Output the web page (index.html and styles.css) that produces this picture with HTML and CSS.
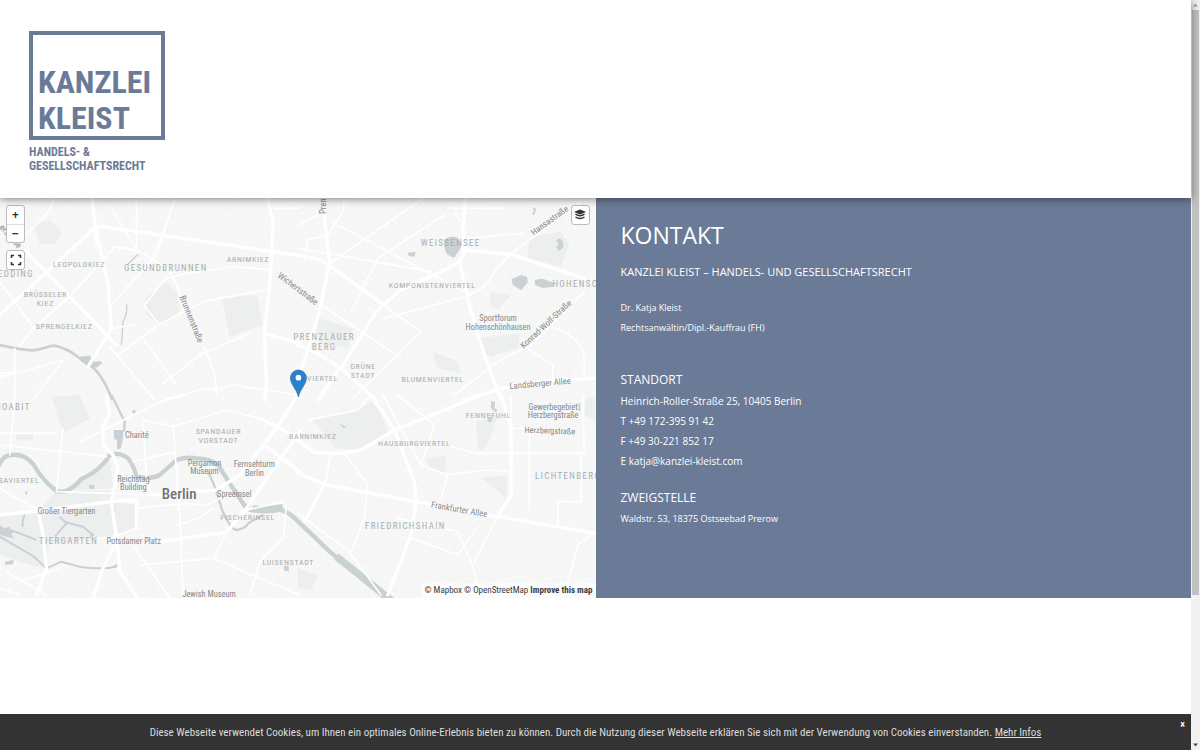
FILE: index.html
```html
<!DOCTYPE html>
<html lang="de">
<head>
<meta charset="utf-8">
<meta name="viewport" content="width=device-width, initial-scale=1">
<title>Kontakt – Kanzlei Kleist</title>
<link rel="stylesheet" href="styles.css">
</head>
<body>
<div class="shell">
<div class="page">
  <header class="header">
    <a class="logo" href="#">
      <span class="logo-box"><span>KANZLEI</span><span>KLEIST</span></span>
      <span class="logo-sub"><span>HANDELS- &amp;</span><span>GESELLSCHAFTSRECHT</span></span>
    </a>
  </header>
  <main class="main">
    <section class="map" aria-label="Karte">
      <svg class="map-canvas" viewBox="0 9 1788 1200" preserveAspectRatio="xMidYMid slice">
        <defs>
          <pattern id="streets" width="46" height="38" patternUnits="userSpaceOnUse" patternTransform="rotate(-9)">
            <path d="M0 8H46M0 27H30M12 0V38M33 8V38" class="lane"/>
          </pattern>
          <pattern id="streets2" width="58" height="44" patternUnits="userSpaceOnUse" patternTransform="rotate(32)">
            <path d="M0 10H58M20 0V44M43 10V44" class="lane"/>
          </pattern>
        </defs>
        <rect class="land" y="0" width="1788" height="1220"/>
        <rect y="0" width="1788" height="1220" fill="url(#streets)"/>
        <path d="M890 200L1250 330 1400 600 1500 1209H900L1150 900 890 760Z" class="land"/>
        <path d="M890 200L1250 330 1400 600 1500 1209H900L1150 900 890 760Z" fill="url(#streets2)"/>

        <g class="park">
          <path d="M435 310L500 260 530 290 540 350 480 390 440 360ZM665 310L770 300 790 390 690 425ZM100 90L150 75 185 110 165 150 120 145Z"/>
          <g transform="translate(894 0)"><path d="M695 125L790 110 815 150 790 215 690 190ZM540 430L665 415 660 460 580 485 550 470ZM405 470L480 500 490 535 420 520ZM60 370L165 400 150 460 60 440ZM580 290L640 300 600 345 575 330Z"/></g>
          <g transform="translate(0 600)"><path d="M0 360L115 345 170 290 330 285 345 320 410 330 405 400 300 430 150 445 130 520 0 430ZM155 5L240 0 270 70 190 115ZM50 115H100V135H50ZM0 430L130 520 90 510 0 480ZM240 250L330 190 340 280 220 285Z"/></g>
          <g transform="translate(894 600)"><path d="M45 75L175 50 220 20 245 45 270 110 180 165 115 160ZM550 250L630 240 625 310 590 280ZM535 80L600 60 585 110 560 165 540 165ZM385 190L445 180 440 235 395 215ZM0 520L60 540 40 585 0 580ZM865 10H893V80L860 60Z"/></g>
        </g>

        <g class="water">
          <path class="river" d="M0 450Q50 462 95 466C130 465 140 452 165 452Q205 462 232 484L262 508Q300 520 338 615" stroke-width="8"/>
          <path d="M240 485L270 482 285 500 303 498 307 505 290 518 262 512Z"/>
          <path class="river" d="M415 178L382 210M380 328Q385 350 370 380L365 450" stroke-width="4"/>
          <g transform="translate(894 0)">
            <path d="M440 135Q455 120 480 128 492 145 488 160L470 188 450 180Q435 160 440 135ZM330 173L354 171 350 185 333 183ZM775 137Q785 125 795 138L797 155 785 168 775 157 783 148ZM641 252L670 240 688 246 690 262 670 286 645 270ZM711 256Q730 247 745 255L765 262 768 275 735 279 712 270ZM705 35L715 42 711 58 702 60 708 48Z"/>
          </g>
          <g transform="translate(0 600)">
            <path class="river" d="M335 0L375 80 373 110" stroke-width="7"/>
            <path d="M342 105H371L368 140 362 162H352V135L343 132Z"/>
            <path class="river" d="M-5 215Q10 180 35 180 72 175 100 207 130 258 170 288 205 299 245 252 300 230 330 180 360 170 385 190 402 210 410 245 450 255 480 240L530 195Q560 185 590 190 630 190 655 210L690 265 735 333Q770 350 800 345 845 335 880 365L990 470 1170 620" stroke-width="13"/>
            <path class="river" d="M735 336Q790 352 850 338M1010 485L1180 620" stroke-width="22"/>
            <path class="river" d="M625 230Q650 280 665 340 690 400 710 405 730 405 750 382L790 360" stroke-width="7"/>
            <path class="river" d="M0 425L100 483 140 520 185 500 240 515Q300 525 350 515M75 360Q65 380 70 395M180 365Q195 385 210 385L250 395 280 420 270 425M200 385L165 425M20 400L60 415 110 435" stroke-width="6"/>
            <path d="M0 390L15 400 30 395 28 408 45 408 35 417 42 430 20 425 0 420ZM15 500L42 495 40 507 18 510ZM268 270H284V281H268ZM338 332H344V357H338ZM342 510L353 508 353 523ZM75 290L83 290 80 302ZM398 46L407 46V56L398 55ZM853 512L867 512V529L853 527Z"/>
          </g>
          <g transform="translate(894 600)"><path d="M126 86L145 95 138 100ZM580 18L592 20 590 40 600 45 592 52 580 40ZM570 65H582V80H570ZM842 25H848V48H842Z"/></g>
        </g>

        <g class="minor">
          <path d="M165 0Q155 40 125 75L70 125M335 40L415 170M495 105L470 180 335 330M100 395L0 260M60 455L95 405 215 300 345 155 420 170 500 220 530 265 555 345M0 545Q80 530 190 495L100 615M530 0L495 100 460 180M435 335L480 390M800 285L610 320 475 390 355 480M500 250L560 235 700 215 820 225M500 245L435 330M330 455L465 615M430 430L530 570M900 600L700 570 650 585 615 580 490 615M610 455Q650 520 650 600M335 400L405 390M0 535L50 530M45 460V615M490 565L600 480 760 410M820 40H900M410 0V160M350 155L410 165"/>
          <g transform="translate(894 0)"><path d="M140 0L135 50 90 120 30 135 20 200M390 0L90 210M0 90L60 60M440 60L240 190 160 350M120 90L500 290M500 130L680 115M455 40L620 40M70 330L310 490M255 330L370 410 160 615M470 55L500 90M470 600L600 500 700 450 860 290M690 460L765 510V560M770 400Q860 430 860 500V550M520 300L260 370M510 300Q570 280 590 230L640 175 850 20M0 160L400 230"/></g>
          <g transform="translate(0 600)"><path d="M45 0L30 180M0 115H170M0 150L320 185M190 100L170 290M240 140L480 20 560 0M430 70L440 250 455 300 545 310M520 95L540 360 550 600M430 75L520 95 680 45 780 70 900 130M400 200L530 170M170 290L335 295 450 300M0 280L115 345M480 440L680 410 760 330M410 340L560 325 620 330 680 300M410 330V400L335 430 290 430M400 450L510 610M640 490L420 510M640 490L900 600M640 490L680 415M860 330L850 430 780 500 750 600M180 520L60 560M20 530L140 600M720 350L850 320M530 390Q590 380 640 340M0 580L60 600"/></g>
          <g transform="translate(894 600)"><path d="M30 75L180 45 220 0M100 175L80 270 20 380M145 180L210 270 200 370 160 470M255 0L370 210 450 240 560 225 640 230M370 210L410 90 300 0M450 150L530 175H860L855 0M450 240L430 310M695 100V350M640 0V100H700M640 100L640 310M0 355L150 465 250 600M300 370L480 410 520 500 550 600M540 395L480 480 340 430M600 365L530 500M780 390V320H850V180M840 450L800 600M895 410L840 450"/></g>
        </g>
        <g class="major">
          <path d="M0 360L285 98 310 95 450 115 900 182M275 0L290 110 325 270 335 400" />
          <path d="M75 165L350 450M335 400L265 515M800 0L820 80 810 270 793 415 800 560 795 615M793 415L900 445M285 98L290 150"/>
          <g transform="translate(894 0)"><path d="M0 180L70 195 120 230 255 328M0 450L60 475 130 520 235 615M130 520L235 350 300 290 430 230 485 200 505 165 640 178 860 250M505 165L495 100 505 0M485 200L520 350 560 480 610 615M900 550L770 555 610 580 500 615M75 30L95 200 65 350 0 560M125 520L60 615M495 165Q500 140 498 110"/></g>
          <g transform="translate(0 600)"><path d="M0 360L115 348 335 320 410 315M115 345L130 420 140 520 110 600M320 0L330 60 308 95 312 150 340 180 355 220 335 320 350 430 360 520M350 440L310 520 280 610M355 520L410 605M410 315L410 400M470 440L680 412 740 340 850 180 900 110M450 300L650 285 720 240 830 100 900 -10M800 155L900 230M780 70L900 130"/></g>
          <g transform="translate(894 600)"><path d="M-20 120L50 173 130 175 190 165 290 105 550 0M220 0L290 105 350 260 355 320 340 420 270 600M0 235L80 268 355 320 600 365 893 415M600 365L640 300V100L610 0M80 268L20 380"/></g>
        </g>

        <g class="district">
          <text x="160" y="216">LEOPOLDKIEZ</text><text x="373" y="229" class="big">GESUNDBRUNNEN</text><text x="681" y="200">ARNIMKIEZ</text>
          <text x="-30" y="246" class="big">WEDDING</text>
          <text x="137" y="305" class="mid">BRÜSSELER</text><text x="137" y="332" class="mid">KIEZ</text><text x="108" y="402">SPRENGELKIEZ</text>
          <text x="1263" y="154" class="big">WEISSENSEE</text><text x="1167" y="280">KOMPONISTENVIERTEL</text><text x="1658" y="275" class="big">HOHENSCHÖNHAUSEN</text>
          <text x="973" y="434" class="big mid">PRENZLAUER</text><text x="973" y="466" class="big mid">BERG</text>
          <text x="1090" y="522" class="mid">GRÜNE</text><text x="1090" y="549" class="mid">STADT</text><text x="922" y="557">VIERTEL</text><text x="1205" y="562">BLUMENVIERTEL</text>
          <text x="-18" y="644" class="big">MOABIT</text><text x="656" y="717" class="mid">SPANDAUER</text><text x="656" y="744" class="mid">VORSTADT</text>
          <text x="868" y="733">BARNIMKIEZ</text><text x="-53" y="863">HANSAVIERTEL</text><text x="662" y="975">FISCHERINSEL</text><text x="118" y="1048" class="big">TIERGARTEN</text><text x="788" y="1110">LUISENSTADT</text>
          <text x="1135" y="753">HAUSBURGVIERTEL</text><text x="1398" y="669">FENNPFUHL</text><text x="1606" y="852" class="big">LICHTENBERG</text><text x="1096" y="1001" class="big">FRIEDRICHSHAIN</text>
        </g>
        <g class="place">
          <text x="376" y="728">Charité</text><text x="614" y="813" class="mid">Pergamon</text><text x="614" y="838" class="mid">Museum</text><text x="764" y="817" class="mid">Fernsehturm</text><text x="764" y="842" class="mid">Berlin</text>
          <text x="401" y="860" class="mid">Reichstag</text><text x="401" y="885" class="mid">Building</text><text x="652" y="905">Spreeinsel</text><text x="113" y="957">Großer Tiergarten</text><text x="320" y="1048">Potsdamer Platz</text><text x="548" y="1206">Jewish Museum</text>
          <text x="1495" y="378" class="mid">Sportforum</text><text x="1495" y="405" class="mid">Hohenschönhausen</text><text x="1660" y="644" class="mid">Gewerbegebiet</text><text x="1660" y="669" class="mid">Herzbergstraße</text>
          <text x="1574" y="713" transform="rotate(2 1574 713)">Herzbergstraße</text>
        </g>
        <g class="street">
          <text transform="translate(832 245) rotate(37)">Wichertstraße</text><text transform="translate(539 306) rotate(68)">Brunnenstraße</text><text transform="translate(980 57) rotate(-90)">Prenzlauer</text>
          <text transform="translate(1602 122) rotate(-36)">Hansastraße</text><text transform="translate(1572 462) rotate(-43)">Konrad-Wolf-Straße</text><text transform="translate(1530 582) rotate(-5)">Landsberger Allee</text><text transform="translate(1293 937) rotate(10)">Frankfurter Allee</text>
          <text transform="translate(-2 98) rotate(48)">erstraße</text>
        </g>
        <text class="city" x="486" y="911">Berlin</text>
        <g transform="translate(896 524)">
          <path d="M0 82C-5 58-24 44-24 25A24 24 0 0 1 24 25C24 44 5 58 0 82Z" class="pin"/>
          <circle cy="24" r="8.500" fill="#fff"/>
        </g>
      </svg>
      <div class="map-tools">
        <div class="tool-group"><button aria-label="Vergrößern">+</button><button aria-label="Verkleinern">−</button></div>
        <div class="tool-group"><button aria-label="Vollbild"><svg viewBox="0 0 12 12"><path d="M1.500 4V1.500H4M8 1.500H10.500V4M10.500 8V10.500H8M4 10.500H1.500V8"/></svg></button></div>
      </div>
      <div class="map-layers tool-group"><button aria-label="Ebenen"><svg viewBox="0 0 12 12"><path class="solid" d="M6 1.200L10.200 3 6 4.800 1.800 3Z"/><path d="M1.500 5.200Q6 8.300 10.500 5.200M1.500 8Q6 11.100 10.500 8"/></svg></button></div>
      <p class="credits"><a href="#">© Mapbox</a> <a href="#">© OpenStreetMap</a> <a href="#" class="improve">Improve this map</a></p>
    </section>
    <section class="contact">
      <h1>KONTAKT</h1>
      <h2>KANZLEI KLEIST – HANDELS- UND GESELLSCHAFTSRECHT</h2>
      <p class="person">Dr. Katja Kleist<br>Rechtsanwältin/Dipl.-Kauffrau (FH)</p>
      <h3>STANDORT</h3>
      <address>Heinrich-Roller-Straße 25, 10405 Berlin<br>T +49 172-395 91 42<br>F +49 30-221 852 17<br>E <a href="#">katja@kanzlei-kleist.com</a></address>
      <h3>ZWEIGSTELLE</h3>
      <p class="branch">Waldstr. 53, 18375 Ostseebad Prerow</p>
    </section>
  </main>
  <aside class="cookies">
    <p>Diese Webseite verwendet Cookies, um Ihnen ein optimales Online-Erlebnis bieten zu können. Durch die Nutzung dieser Webseite erklären Sie sich mit der Verwendung von Cookies einverstanden. <a href="#">Mehr Infos</a></p>
    <button class="close" aria-label="Schließen">×</button>
  </aside>
</div>
<div class="scrollbar" aria-hidden="true">
  <svg viewBox="0 0 9 9"><path d="M2 6L4.500 3 7 6Z" fill="#a3a3a3"/></svg>
  <span class="thumb"></span>
  <svg viewBox="0 0 9 9"><path d="M2 3L4.500 6 7 3Z" fill="#505050"/></svg>
</div>
</div>
</body>
</html>
```
FILE: styles.css
```css
* { box-sizing: border-box; }
body { margin: 0; background: #fff; font-family: "Open Sans", "Noto Sans", sans-serif; }
h1, h2, h3, p { margin: 0; font-weight: 400; }
a { color: inherit; text-decoration: none; }
button { border: 0; background: none; padding: 0; font: inherit; color: inherit; cursor: pointer; }

.shell { display: flex; min-height: 100vh; }
.page { flex: 1; min-width: 0; display: flex; flex-direction: column; }

.header { position: relative; z-index: 2; padding: 31px 29px 25px; background: #fff; box-shadow: 0 1px 8px rgba(0, 0, 0, .5); }
.logo { display: inline-block; vertical-align: top; color: #6b7a97; font-family: "Roboto Condensed", Roboto, sans-serif; font-weight: 700; }
.logo-box { display: flex; flex-direction: column; justify-content: flex-end; width: 136px; height: 109px; padding: 0 5px; border: 4px solid; font-size: 32px; line-height: 36px; }
.logo-sub { display: flex; flex-direction: column; padding-top: 5px; font-size: 12px; line-height: 14px; }

.main { display: grid; grid-template-columns: 1fr 1fr; min-height: 400px; }
.map { position: relative; overflow: hidden; }
.map-canvas { position: absolute; inset: 0; width: 100%; height: 100%; font-family: "Roboto Condensed", Roboto, sans-serif; }
.land { fill: #f5f6f5; }
.lane { fill: none; stroke: #f9faf9; stroke-width: 2; }
.park { fill: #edefef; }
.water { fill: #c9d1d2; }
.river { fill: none; stroke: #c9d1d2; stroke-linejoin: round; }
.minor, .major { fill: none; stroke: #fff; stroke-linejoin: round; stroke-linecap: round; stroke-width: 5px; }
.major { stroke-width: 10px; }
.district { font-size: 24px; letter-spacing: 2px; fill: #a9adad; }
.district .big { font-size: 27px; letter-spacing: 4px; }
.place { font-size: 25px; fill: #858888; }
.street { font-size: 26px; fill: #858888; }
.mid { text-anchor: middle; }
.city { font-size: 45px; font-weight: 500; fill: #707272; }
.pin { fill: #2a81cb; stroke: #2a6fae; stroke-width: 2px; }

.map-tools { position: absolute; top: 7px; left: 6px; display: flex; flex-direction: column; gap: 7px; }
.map-layers { position: absolute; top: 7px; right: 6px; }
.tool-group { display: flex; flex-direction: column; background: #fff; border: 1px solid #bbb; border-radius: 3px; }
.tool-group button { display: grid; place-items: center; width: 17px; height: 18px; font-size: 12px; font-weight: 700; line-height: 18px; color: #333; }
.tool-group button + button { border-top: 1px solid #ddd; }
.tool-group svg { width: 12px; height: 12px; fill: none; stroke: #333; stroke-width: 1.500px; }
.tool-group .solid { fill: #333; }
.credits { position: absolute; right: 0; bottom: 0; padding: 0 3px; background: rgba(255, 255, 255, .5); font: 9px/15px "Roboto Condensed", "Liberation Sans", sans-serif; color: #404040; }
.credits .improve { font-weight: 700; }

.contact { padding: 20px 25px; background: #6b7a97; color: #fff; font-size: 9px; line-height: 20px; }
.contact h1 { font-size: 23px; line-height: 34px; }
.contact h2 { margin-top: 10px; font-size: 11px; line-height: 20px; }
.person { margin: 16px 0 31px; }
.contact h3 { font-size: 12px; line-height: 22px; }
.contact address { margin-bottom: 16px; font-size: 10px; font-style: normal; }
.contact .branch { line-height: 19px; }

.cookies { position: sticky; bottom: 0; display: flex; align-items: center; justify-content: center; min-height: 36px; margin-top: auto; padding: 2px 24px 0; background: #333; color: #ddd; font: 11px/16px "Roboto Condensed", Roboto, sans-serif; }
.cookies a { text-decoration: underline; }
.close { position: absolute; top: 3px; right: 6px; font-size: 10px; font-weight: 700; color: #fff; }

.scrollbar { position: sticky; top: 0; display: flex; flex-direction: column; width: 9px; height: 100vh; background: #f1f1f1; }
.scrollbar svg { display: block; width: 9px; height: 10px; }
.thumb { flex: 0 0 78%; margin: 0 1px auto; background: #c1c1c1; }
```
